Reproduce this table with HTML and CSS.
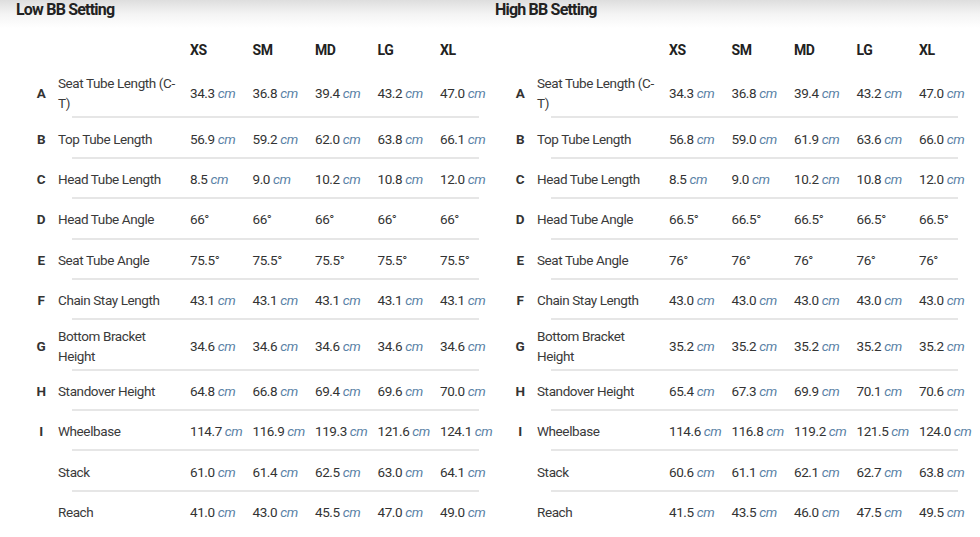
FILE: index.html
```html
<!DOCTYPE html>
<html>
<head>
<meta charset="utf-8">
<link rel="stylesheet" href="styles.css">
</head>
<body>
<div class="page">
  <section class="geo">
    <h2 class="title">Low BB Setting</h2>
    <div class="row head"><span class="letter"></span><span class="name"></span><span class="val">XS</span><span class="val">SM</span><span class="val">MD</span><span class="val">LG</span><span class="val last">XL</span></div>
    <div class="row"><span class="letter">A</span><span class="name">Seat Tube Length (C-T)</span><span class="val">34.3 <i>cm</i></span><span class="val">36.8 <i>cm</i></span><span class="val">39.4 <i>cm</i></span><span class="val">43.2 <i>cm</i></span><span class="val last">47.0 <i>cm</i></span></div>
    <div class="row"><span class="letter">B</span><span class="name">Top Tube Length</span><span class="val">56.9 <i>cm</i></span><span class="val">59.2 <i>cm</i></span><span class="val">62.0 <i>cm</i></span><span class="val">63.8 <i>cm</i></span><span class="val last">66.1 <i>cm</i></span></div>
    <div class="row"><span class="letter">C</span><span class="name">Head Tube Length</span><span class="val">8.5 <i>cm</i></span><span class="val">9.0 <i>cm</i></span><span class="val">10.2 <i>cm</i></span><span class="val">10.8 <i>cm</i></span><span class="val last">12.0 <i>cm</i></span></div>
    <div class="row"><span class="letter">D</span><span class="name">Head Tube Angle</span><span class="val">66°</span><span class="val">66°</span><span class="val">66°</span><span class="val">66°</span><span class="val last">66°</span></div>
    <div class="row"><span class="letter">E</span><span class="name">Seat Tube Angle</span><span class="val">75.5°</span><span class="val">75.5°</span><span class="val">75.5°</span><span class="val">75.5°</span><span class="val last">75.5°</span></div>
    <div class="row"><span class="letter">F</span><span class="name">Chain Stay Length</span><span class="val">43.1 <i>cm</i></span><span class="val">43.1 <i>cm</i></span><span class="val">43.1 <i>cm</i></span><span class="val">43.1 <i>cm</i></span><span class="val last">43.1 <i>cm</i></span></div>
    <div class="row"><span class="letter">G</span><span class="name">Bottom Bracket Height</span><span class="val">34.6 <i>cm</i></span><span class="val">34.6 <i>cm</i></span><span class="val">34.6 <i>cm</i></span><span class="val">34.6 <i>cm</i></span><span class="val last">34.6 <i>cm</i></span></div>
    <div class="row"><span class="letter">H</span><span class="name">Standover Height</span><span class="val">64.8 <i>cm</i></span><span class="val">66.8 <i>cm</i></span><span class="val">69.4 <i>cm</i></span><span class="val">69.6 <i>cm</i></span><span class="val last">70.0 <i>cm</i></span></div>
    <div class="row"><span class="letter">I</span><span class="name">Wheelbase</span><span class="val">114.7 <i>cm</i></span><span class="val">116.9 <i>cm</i></span><span class="val">119.3 <i>cm</i></span><span class="val">121.6 <i>cm</i></span><span class="val last">124.1 <i>cm</i></span></div>
    <div class="row"><span class="letter"></span><span class="name">Stack</span><span class="val">61.0 <i>cm</i></span><span class="val">61.4 <i>cm</i></span><span class="val">62.5 <i>cm</i></span><span class="val">63.0 <i>cm</i></span><span class="val last">64.1 <i>cm</i></span></div>
    <div class="row end"><span class="letter"></span><span class="name">Reach</span><span class="val">41.0 <i>cm</i></span><span class="val">43.0 <i>cm</i></span><span class="val">45.5 <i>cm</i></span><span class="val">47.0 <i>cm</i></span><span class="val last">49.0 <i>cm</i></span></div>
  </section>
  <section class="geo">
    <h2 class="title">High BB Setting</h2>
    <div class="row head"><span class="letter"></span><span class="name"></span><span class="val">XS</span><span class="val">SM</span><span class="val">MD</span><span class="val">LG</span><span class="val last">XL</span></div>
    <div class="row"><span class="letter">A</span><span class="name">Seat Tube Length (C-T)</span><span class="val">34.3 <i>cm</i></span><span class="val">36.8 <i>cm</i></span><span class="val">39.4 <i>cm</i></span><span class="val">43.2 <i>cm</i></span><span class="val last">47.0 <i>cm</i></span></div>
    <div class="row"><span class="letter">B</span><span class="name">Top Tube Length</span><span class="val">56.8 <i>cm</i></span><span class="val">59.0 <i>cm</i></span><span class="val">61.9 <i>cm</i></span><span class="val">63.6 <i>cm</i></span><span class="val last">66.0 <i>cm</i></span></div>
    <div class="row"><span class="letter">C</span><span class="name">Head Tube Length</span><span class="val">8.5 <i>cm</i></span><span class="val">9.0 <i>cm</i></span><span class="val">10.2 <i>cm</i></span><span class="val">10.8 <i>cm</i></span><span class="val last">12.0 <i>cm</i></span></div>
    <div class="row"><span class="letter">D</span><span class="name">Head Tube Angle</span><span class="val">66.5°</span><span class="val">66.5°</span><span class="val">66.5°</span><span class="val">66.5°</span><span class="val last">66.5°</span></div>
    <div class="row"><span class="letter">E</span><span class="name">Seat Tube Angle</span><span class="val">76°</span><span class="val">76°</span><span class="val">76°</span><span class="val">76°</span><span class="val last">76°</span></div>
    <div class="row"><span class="letter">F</span><span class="name">Chain Stay Length</span><span class="val">43.0 <i>cm</i></span><span class="val">43.0 <i>cm</i></span><span class="val">43.0 <i>cm</i></span><span class="val">43.0 <i>cm</i></span><span class="val last">43.0 <i>cm</i></span></div>
    <div class="row"><span class="letter">G</span><span class="name">Bottom Bracket Height</span><span class="val">35.2 <i>cm</i></span><span class="val">35.2 <i>cm</i></span><span class="val">35.2 <i>cm</i></span><span class="val">35.2 <i>cm</i></span><span class="val last">35.2 <i>cm</i></span></div>
    <div class="row"><span class="letter">H</span><span class="name">Standover Height</span><span class="val">65.4 <i>cm</i></span><span class="val">67.3 <i>cm</i></span><span class="val">69.9 <i>cm</i></span><span class="val">70.1 <i>cm</i></span><span class="val last">70.6 <i>cm</i></span></div>
    <div class="row"><span class="letter">I</span><span class="name">Wheelbase</span><span class="val">114.6 <i>cm</i></span><span class="val">116.8 <i>cm</i></span><span class="val">119.2 <i>cm</i></span><span class="val">121.5 <i>cm</i></span><span class="val last">124.0 <i>cm</i></span></div>
    <div class="row"><span class="letter"></span><span class="name">Stack</span><span class="val">60.6 <i>cm</i></span><span class="val">61.1 <i>cm</i></span><span class="val">62.1 <i>cm</i></span><span class="val">62.7 <i>cm</i></span><span class="val last">63.8 <i>cm</i></span></div>
    <div class="row end"><span class="letter"></span><span class="name">Reach</span><span class="val">41.5 <i>cm</i></span><span class="val">43.5 <i>cm</i></span><span class="val">46.0 <i>cm</i></span><span class="val">47.5 <i>cm</i></span><span class="val last">49.5 <i>cm</i></span></div>
  </section>
</div>
</body>
</html>
```

FILE: styles.css
```css
html, body {
  margin: 0;
  padding: 0;
}
body {
  background: linear-gradient(#dedede 0, #f4f4f4 14px, #ffffff 28px) no-repeat;
  background-color: #fff;
  font-family: Roboto, "Noto Sans", "Liberation Sans", sans-serif;
  color: #333;
  width: 980px;
  height: 537px;
  overflow: hidden;
}
.page {
  display: flex;
}
.geo {
  width: 479px;
  flex: none;
}
.title {
  margin: 0 0 12px;
  padding-left: 16px;
  height: 20px;
  line-height: 20px;
  font-size: 16px;
  font-weight: 700;
  letter-spacing: -0.8px;
  color: #222;
}
.row {
  display: flex;
  align-items: center;
  margin-left: 32px;
  box-sizing: border-box;
  min-height: 40.4px;
  padding: 5.2px 0;
  font-size: 13.5px;
  line-height: 20px;
  letter-spacing: -0.4px;
  background: linear-gradient(#e6e6e6, #e6e6e6) no-repeat right bottom / calc(100% - 40px) 2px;
}
.row.head {
  min-height: 36px;
  padding: 0;
  font-size: 14px;
  background: none;
}
.row.end {
  background: none;
}
.letter {
  width: 18px;
  flex: none;
  text-align: center;
  font-weight: 700;
  color: #333;
}
.name {
  width: 140px;
  flex: none;
  box-sizing: border-box;
  padding: 0 14px 0 8px;
  color: #3a3a3a;
}
.val {
  width: 62.5px;
  flex: none;
  white-space: nowrap;
  color: #333;
}
.val.last {
  width: 53px;
}
.head .val {
  font-weight: 700;
  color: #222;
}
.val i {
  color: #5a82a6;
  font-style: italic;
}
```
